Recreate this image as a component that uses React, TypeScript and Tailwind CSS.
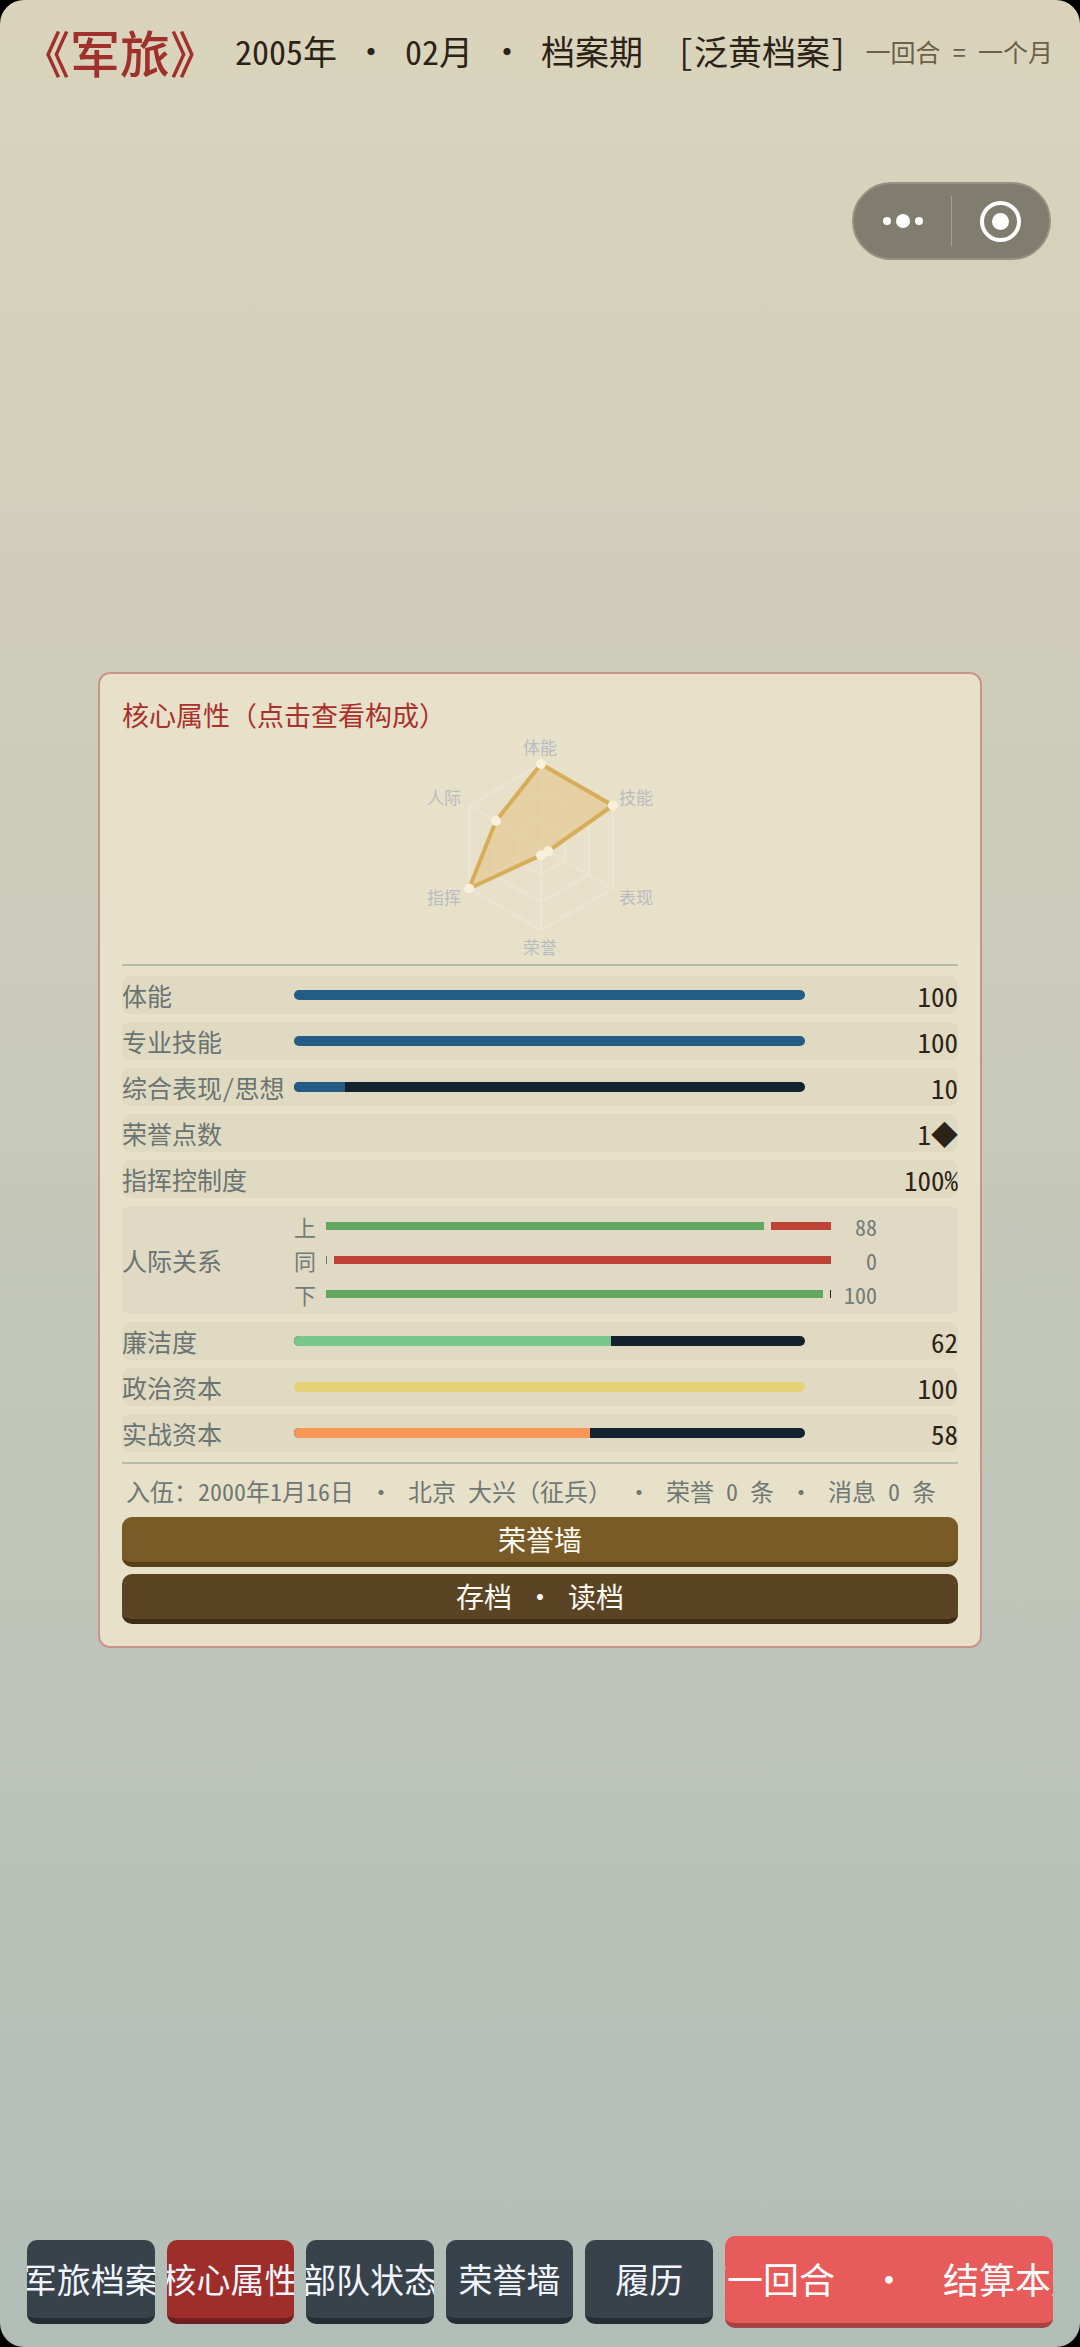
import { ReactNode } from 'react';
import { clsx } from 'clsx';

interface Stat {
  label: string;
  value: string;
  percent?: number;
  color?: string;
}

interface Relation {
  label: string;
  value: number;
}

interface NavItem {
  label: string;
  active?: boolean;
}

const mainStats: Stat[] = [
  { label: '体能', value: '100', percent: 100, color: 'bg-[#255c86]' },
  { label: '专业技能', value: '100', percent: 100, color: 'bg-[#255c86]' },
  { label: '综合表现/思想', value: '10', percent: 10, color: 'bg-[#255c86]' },
  { label: '荣誉点数', value: '1◆' },
  { label: '指挥控制度', value: '100%' },
];

const relations: Relation[] = [
  { label: '上', value: 88 },
  { label: '同', value: 0 },
  { label: '下', value: 100 },
];

const capitalStats: Stat[] = [
  { label: '廉洁度', value: '62', percent: 62, color: 'bg-[#7ac78b]' },
  { label: '政治资本', value: '100', percent: 100, color: 'bg-[#e5d178]' },
  { label: '实战资本', value: '58', percent: 58, color: 'bg-[#fa9757]' },
];

const radarAxes = [
  { label: '体能', value: 1, x: 120, y: 15 },
  { label: '技能', value: 1, x: 216, y: 65 },
  { label: '表现', value: 0.1, x: 216, y: 165 },
  { label: '荣誉', value: 0.1, x: 120, y: 215 },
  { label: '指挥', value: 1, x: 24, y: 165 },
  { label: '人际', value: 0.627, x: 24, y: 65 },
];

const navItems: NavItem[] = [
  { label: '军旅档案' },
  { label: '核心属性', active: true },
  { label: '部队状态' },
  { label: '荣誉墙' },
  { label: '履历' },
];

const RADAR_CENTER = { x: 121, y: 114 };
const RADAR_RADIUS = 83;

function radarPoint(index: number, ratio: number) {
  const angle = (Math.PI / 3) * index - Math.PI / 2;
  return {
    x: RADAR_CENTER.x + Math.cos(angle) * RADAR_RADIUS * ratio,
    y: RADAR_CENTER.y + Math.sin(angle) * RADAR_RADIUS * ratio,
  };
}

function toPolygon(ratios: number[]) {
  return ratios
    .map((ratio, i) => {
      const p = radarPoint(i, ratio);
      return `${p.x.toFixed(1)},${p.y.toFixed(1)}`;
    })
    .join(' ');
}

function Dot({ className = 'w-[2em]' }: { className?: string }) {
  return <span className={clsx('inline-block shrink-0 text-center', className)}>·</span>;
}

function RadarChart() {
  const values = radarAxes.map((axis) => axis.value);

  return (
    <svg viewBox="0 0 240 231" className="mx-auto block w-[240px]" role="img" aria-label="核心属性">
      {[1 / 3, 2 / 3, 1].map((level) => (
        <polygon
          key={level}
          points={toPolygon(values.map(() => level))}
          fill="none"
          stroke="#ece5d1"
          strokeWidth="2"
        />
      ))}
      {radarAxes.map((axis, i) => {
        const p = radarPoint(i, 1);
        return (
          <line
            key={axis.label}
            x1={RADAR_CENTER.x}
            y1={RADAR_CENTER.y}
            x2={p.x}
            y2={p.y}
            stroke="#ece5d1"
            strokeWidth="2"
          />
        );
      })}
      <polygon
        points={toPolygon(values)}
        fill="#dfb05c"
        fillOpacity="0.35"
        stroke="#d8ad57"
        strokeWidth="4"
        strokeLinejoin="round"
      />
      {values.map((value, i) => {
        const p = radarPoint(i, value);
        return <circle key={i} cx={p.x} cy={p.y} r="5" fill="#f8f0da" />;
      })}
      {radarAxes.map((axis) => (
        <text
          key={axis.label}
          x={axis.x}
          y={axis.y + 6}
          textAnchor="middle"
          fill="#b8bcc0"
          className="text-[17px]"
        >
          {axis.label}
        </text>
      ))}
    </svg>
  );
}

function StatRow({ stat }: { stat: Stat }) {
  return (
    <button className="flex h-[38px] w-full items-center rounded-lg bg-[#e0dac3] text-left">
      <span className="w-[172px] shrink-0 whitespace-nowrap text-[25px] text-[#6b7472]">{stat.label}</span>
      <span className="min-w-0 flex-1">
        {stat.percent !== undefined && (
          <span className="block h-[10px] overflow-hidden rounded-full bg-[#14222f]">
            <span className={clsx('block h-full', stat.color)} style={{ width: `${stat.percent}%` }} />
          </span>
        )}
      </span>
      <span className="w-[153px] shrink-0 text-right text-[27px] text-[#2c2318]">{stat.value}</span>
    </button>
  );
}

function RelationRow() {
  return (
    <button className="flex w-full items-center rounded-lg bg-[#e0d9c4] py-[3px] text-left">
      <span className="w-[172px] shrink-0 text-[25px] text-[#6b7472]">人际关系</span>
      <span className="min-w-0 flex-1">
        {relations.map((relation) => (
          <span key={relation.label} className="flex h-[34px] items-center text-[22px] text-[#747c78]">
            <span className="w-8 shrink-0">{relation.label}</span>
            <span className="flex h-2 min-w-0 flex-1 gap-[7px]">
              <span
                className={clsx('h-full min-w-px', relation.value > 0 ? 'bg-[#62a762]' : 'bg-[#6b7472]')}
                style={{ flexGrow: relation.value }}
              />
              <span
                className={clsx('h-full min-w-px', relation.value < 100 ? 'bg-[#be4236]' : 'bg-[#14222f]')}
                style={{ flexGrow: 100 - relation.value }}
              />
            </span>
            <span className="w-[46px] shrink-0 text-right">{relation.value}</span>
          </span>
        ))}
      </span>
      <span className="w-[81px] shrink-0" />
    </button>
  );
}

function PanelButton({ className, children }: { className: string; children: ReactNode }) {
  return (
    <button
      className={clsx(
        'flex h-[50px] w-full items-center justify-center whitespace-nowrap rounded-[10px] border-b-[5px] pb-0.5 text-[28px] text-[#fffaf4]',
        className,
      )}
    >
      {children}
    </button>
  );
}

export default function App() {
  return (
    <div className="bg-black">
      <div
        lang="zh-CN"
        className="relative flex min-h-screen flex-col rounded-3xl bg-linear-to-b from-[#dad4bc] to-[#b2bdb7] font-['Noto_Sans_CJK_SC',sans-serif] leading-none [font-feature-settings:'hwid']"
      >
        <header className="flex h-[84px] items-center whitespace-nowrap pl-5 pr-[27px] pt-[18px]">
          <h1 className="text-[50px] font-medium text-[#a0302c]">《军旅》</h1>
          <p className="ml-[15px] text-[34px] text-[#2c2318]">
            2005年
            <Dot />
            02月
            <Dot />
            档案期<span className="ml-[1em]">[泛黄档案]</span>
          </p>
          <p className="ml-auto text-[25px] text-[#6b6048]">一回合 = 一个月</p>
        </header>

        <div className="absolute right-[29px] top-[182px] flex h-[78px] w-[199px] items-center rounded-full border-2 border-[#969283] bg-[#807c6e]">
          <button aria-label="更多" className="flex h-full flex-1 items-center justify-center gap-[5px]">
            <span className="size-2 rounded-full bg-white" />
            <span className="size-[14px] rounded-full bg-white" />
            <span className="size-2 rounded-full bg-white" />
          </button>
          <span className="h-[50px] w-px bg-[#a5a195]" />
          <button aria-label="关闭" className="flex h-full flex-1 items-center justify-center">
            <span className="flex size-[41px] items-center justify-center rounded-full border-4 border-white">
              <span className="size-[17px] rounded-full bg-white" />
            </span>
          </button>
        </div>

        <main className="flex flex-1 items-center px-[98px]">
          <section className="w-full rounded-xl border-2 border-[#c9958a] bg-[#e8e1ca] p-[22px]">
            <h2 className="flex h-[37px] items-center text-[27px] text-[#a8312d] [font-feature-settings:normal]">
              核心属性（点击查看构成）
            </h2>
            <RadarChart />
            <div className="mb-[10px] h-0.5 bg-[#b4bcae]" />
            <div className="flex flex-col gap-2">
              {mainStats.map((stat) => (
                <StatRow key={stat.label} stat={stat} />
              ))}
              <RelationRow />
              {capitalStats.map((stat) => (
                <StatRow key={stat.label} stat={stat} />
              ))}
            </div>
            <div className="mt-[10px] h-0.5 bg-[#b9bbab]" />
            <p className="flex h-[53px] items-center whitespace-pre pl-1 text-[24px] text-[#6f7875]">
              入伍：2000年1月16日
              <Dot className="w-[54px]" />
              北京 大兴<span className="[font-feature-settings:normal]">（征兵）</span>
              <Dot className="w-[54px]" />
              荣誉 0 条
              <Dot className="w-[54px]" />
              消息 0 条
            </p>
            <div className="flex flex-col gap-[7px]">
              <PanelButton className="border-[#573f1a] bg-[#785b26]">荣誉墙</PanelButton>
              <PanelButton className="border-[#3e2c15] bg-[#5b4424]">
                存档
                <Dot />
                读档
              </PanelButton>
            </div>
          </section>
        </main>

        <nav className="flex items-center gap-3 px-[27px] pb-[19px]">
          {navItems.map((item) => (
            <button
              key={item.label}
              className={clsx(
                'flex h-[84px] min-w-0 flex-1 items-center justify-center overflow-hidden whitespace-nowrap rounded-[10px] border-b-[6px] text-[34px] text-[#f1f4fb]',
                item.active ? 'border-[#701f1d] bg-[#9f2e2b]' : 'border-[#262e34] bg-[#38424b]',
              )}
            >
              {item.label}
            </button>
          ))}
          <button className="flex h-[92px] w-[328px] shrink-0 items-center justify-center overflow-hidden whitespace-nowrap rounded-[10px] border-b-[5px] border-[#a54242] bg-[#e85b5b] pb-1 text-[36px] text-white">
            下一回合
            <Dot className="w-[3em]" />
            结算本月
          </button>
        </nav>
      </div>
    </div>
  );
}
